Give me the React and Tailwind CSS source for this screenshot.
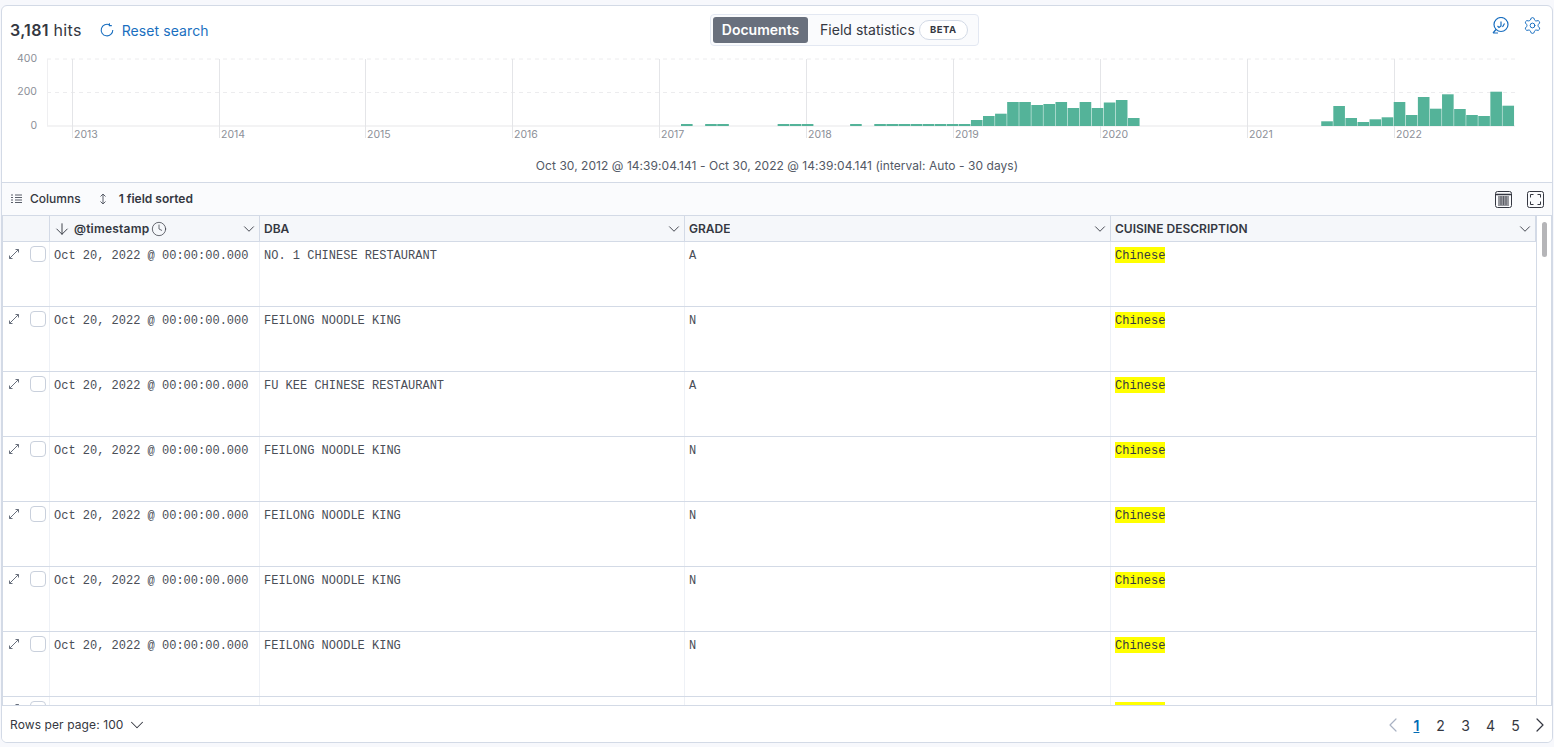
import React from "react";
import { ChevronDown, ChevronLeft, ChevronRight, ArrowDown, Clock, Settings } from "lucide-react";

const rows = [
  "NO. 1 CHINESE RESTAURANT|A",
  "FEILONG NOODLE KING|N",
  "FU KEE CHINESE RESTAURANT|A",
  "FEILONG NOODLE KING|N",
  "FEILONG NOODLE KING|N",
  "FEILONG NOODLE KING|N",
  "FEILONG NOODLE KING|N",
].map((r) => r.split("|"));

const bars = {
  0: 2, 2: 2, 3: 2, 8: 2, 9: 2, 10: 2, 14: 2, 16: 2, 17: 2, 18: 2, 19: 2, 20: 2, 21: 2, 22: 2, 23: 2,
  24: 6, 25: 10, 26: 12.3, 27: 24, 28: 24, 29: 21, 30: 22, 31: 24, 32: 18, 33: 24, 34: 18, 35: 23.5, 36: 26, 37: 8,
  53: 4.7, 54: 20, 55: 8, 56: 4, 57: 6.7, 58: 8.7, 59: 24, 60: 11, 61: 29, 62: 17.3, 63: 31.7, 64: 17, 65: 11, 66: 10, 67: 34.3, 68: 20.3,
};
const years = [[72, 2013], [219, 2014], [365, 2015], [512, 2016], [659, 2017], [806, 2018], [953, 2019], [1100, 2020], [1247, 2021], [1394, 2022]];

function Chart() {
  return (
    <svg viewBox="2 50 1550 100" className="block w-[1550px] h-[100px]">
      <line x1="47" x2="1515" y1="59" y2="59" stroke="#ececee" strokeDasharray="4 4" />
      <line x1="47" x2="1515" y1="92.5" y2="92.5" stroke="#ececee" strokeDasharray="4 4" />
      <line x1="47.5" x2="47.5" y1="59" y2="126" stroke="#efeff1" />
      <line x1="47" x2="1515" y1="126" y2="126" stroke="#efeff1" strokeWidth="1.5" />
      {years.map(([x, y]) => (
        <g key={y}>
          <line x1={x + 0.5} x2={x + 0.5} y1="59" y2="138" stroke="#e4e5e8" />
          <text x={x + 2} y="138" fontSize="10.5" fill="#8c8f98" fontFamily="Inter, sans-serif">{y}</text>
        </g>
      ))}
      {Object.entries(bars).map(([n, h]) => (
        <rect key={n} x={681 + n * 12.08} y={126 - h} width="11.6" height={h} fill="#54b399" />
      ))}
      {[[400, 62], [200, 95], [0, 129]].map(([t, y]) => (
        <text key={t} x="37" y={y} textAnchor="end" fontSize="10.5" fill="#8c8f98" fontFamily="Inter, sans-serif">{t}</text>
      ))}
    </svg>
  );
}

const ExpandIcon = () => (
  <svg width="12" height="12" viewBox="0 0 12 12" fill="none" stroke="#69707d" strokeWidth="1" className="shrink-0">
    <path d="M1.5 10.5 L10.5 1.5 M7.5 1.5 H10.5 V4.5 M1.5 7.5 V10.5 H4.5" />
  </svg>
);

function HeaderCell({ label }) {
  return (
    <div className="flex items-center justify-between pl-[4px] pr-[1px] border-r border-[#d3dae6]">
      <span className="truncate">{label}</span>
      <ChevronDown size={18} strokeWidth={1.2} className="text-[#343741]" />
    </div>
  );
}

export default function App() {
  return (
    <div className="h-[747px] overflow-hidden bg-[#f7f8fc] pt-[5px] pl-px font-['Inter',sans-serif] text-[#343741]">
      <div className="w-[1552px] h-[738px] flex flex-col overflow-hidden rounded-[6px] border border-[#d3dae6] bg-white">
        <div className="h-[44px] shrink-0 flex items-center pt-[4px]">
          <div className="w-[708px] shrink-0 flex items-center pl-[8px]">
            <span className="text-[16px] tracking-[0.3px]"><b className="font-semibold">3,181</b> hits</span>
            <svg width="14" height="14" viewBox="0 0 14 14" fill="none" stroke="#1a6fc0" strokeWidth="1.1" className="ml-[18px]">
              <path d="M9.6 1.9 A5.8 5.8 0 1 0 12.8 7" />
              <path d="M9.4 0.2 V2.6 H11.8" />
            </svg>
            <span className="ml-[8px] text-[14px] tracking-[0.09px] text-[#1a6fc0]">Reset search</span>
          </div>
          <div className="w-[269px] h-[32px] flex items-center rounded-[4px] border border-[#e3e8f2] bg-[#fafbfd] pl-[2px]">
            <span className="w-[95px] h-[26px] flex items-center justify-center rounded-[3px] bg-[#69707d] pb-[1px] text-[14px] font-semibold text-white">Documents</span>
            <span className="ml-[12px] mb-[1px] text-[14px] tracking-[0.03px]">Field statistics</span>
            <span className="ml-[4px] w-[49px] h-[20px] flex items-center justify-center rounded-full border border-[#d3dae6] bg-white text-[9.5px] font-bold tracking-[0.5px]">BETA</span>
          </div>
          <div className="ml-auto flex items-center gap-[14px] pr-[10px] mt-[-10px]">
            <svg width="17" height="17" viewBox="0 0 17 17" fill="none" stroke="#1a6fc0" strokeWidth="1.2">
              <circle cx="9" cy="7.5" r="7" />
              <path d="M4 12.5 L1 16 M1 16 H6" />
              <path d="M5.5 9 L7 10.5 L9 9 L9 4.5 M10.5 10 L12.5 6.5" />
            </svg>
            <Settings size={19} strokeWidth={1.25} className="text-[#1a6fc0]" />
          </div>
        </div>
        <Chart />
        <div className="h-[32px] shrink-0 flex items-center justify-center text-[12px] tracking-[0.05px] text-[#535966]">
          Oct 30, 2012 @ 14:39:04.141 - Oct 30, 2022 @ 14:39:04.141 (interval: Auto - 30 days)
        </div>
        <div className="h-[34px] shrink-0 flex items-center border-y border-[#d3dae6] bg-[#fafbfd] text-[12px] pl-[9px] pr-[8px]">
          <svg width="11" height="10" viewBox="0 0 11 10" fill="none" stroke="#5a5f6a" strokeWidth="1">
            <path d="M0 1 H2 M4 1 H11 M0 3.5 H2 M4 3.5 H11 M0 6 H2 M4 6 H11 M0 8.5 H2 M4 8.5 H11" />
          </svg>
          <span className="ml-[8px] font-medium">Columns</span>
          <svg width="8" height="12" viewBox="0 0 8 12" fill="none" stroke="#5a5f6a" strokeWidth="1" className="ml-[18px]">
            <path d="M4 1 V11 M1.5 3.5 L4 1 L6.5 3.5 M1.5 8.5 L4 11 L6.5 8.5" />
          </svg>
          <span className="ml-[12px] font-semibold">1 field sorted</span>
          <svg width="17" height="17" viewBox="0 0 17 17" fill="none" stroke="#343741" strokeWidth="1" className="ml-auto">
            <rect x="0.5" y="0.5" width="16" height="16" rx="2" />
            <path d="M1 3.5 H16" strokeWidth="1.5" />
            <path d="M3 6 H14 M3 8 H14 M3 10 H14 M3 12 H14 M3 14 H14" />
            <path d="M6 5 V14 M8.5 5 V14 M11 5 V14" strokeWidth="0.6" />
          </svg>
          <svg width="17" height="17" viewBox="0 0 17 17" fill="none" stroke="#343741" strokeWidth="1" className="ml-[15px]">
            <rect x="0.5" y="0.5" width="16" height="16" rx="2" />
            <path d="M3.5 6.5 V3.5 H6.5 M10.5 3.5 H13.5 V6.5 M13.5 10.5 V13.5 H10.5 M6.5 13.5 H3.5 V10.5" />
          </svg>
        </div>
        <div className="flex-1 min-h-0 overflow-hidden relative border-x border-[#d3dae6]">
          <div className="grid grid-cols-[47px_210px_425px_426px_425px] h-[26px] border-b border-[#d3dae6] bg-[#f5f7fa] text-[12px] font-semibold w-[1533px] items-stretch">
            <div className="border-r border-[#d3dae6]" />
            <div className="flex items-center justify-between pl-[3px] pr-[1px] border-r border-[#d3dae6]">
              <span className="flex items-center">
                <ArrowDown size={18} strokeWidth={1.25} />
                <span className="ml-[3px] tracking-[0.2px]">@timestamp</span>
                <Clock size={16} strokeWidth={1.1} className="ml-[2px]" />
              </span>
              <ChevronDown size={18} strokeWidth={1.2} />
            </div>
            <HeaderCell label="DBA" />
            <HeaderCell label="GRADE" />
            <HeaderCell label="CUISINE DESCRIPTION" />
          </div>
          {[...rows, ["", ""]].map(([dba, grade], i) => (
            <div key={i} className="grid grid-cols-[47px_210px_425px_426px_425px] h-[65px] border-b border-[#d3dae6] w-[1533px] text-[12px] font-['Liberation_Mono',monospace] text-[#4a4e57]">
              <div className="flex items-start border-r border-[#eef1f6] pl-[5px]">
                <span className="mt-[6px]"><ExpandIcon /></span>
                <span className="ml-[10px] mt-[4px] w-[16px] h-[16px] rounded-[4px] border border-[#c9d0dc] bg-white" />
              </div>
              <div className="border-r border-[#eef1f6] pl-[4px] pt-[7px] leading-[15px]">{i < 7 ? "Oct 20, 2022 @ 00:00:00.000" : ""}</div>
              <div className="border-r border-[#eef1f6] pl-[4px] pt-[7px] leading-[15px]">{dba}</div>
              <div className="border-r border-[#eef1f6] pl-[4px] pt-[7px] leading-[15px]">{grade}</div>
              <div className="pl-[4px] pt-[5px]">
                {i < 7 ? (
                  <span className="inline-block align-top h-[16px] bg-[#ffff00] text-[#343741] pt-[2px] leading-[15px]">Chinese</span>
                ) : (
                  <span className="block w-[50px] h-[16px] bg-[#ffff00]" />
                )}
              </div>
            </div>
          ))}
          <div className="absolute left-[1533px] top-0 bottom-0 w-px bg-[#d3dae6]" />
          <div className="absolute left-[1539px] top-[6px] w-[5px] h-[35px] rounded-full bg-[#b5b5b8]" />
        </div>
        <div className="h-[37px] shrink-0 flex items-center border-t border-[#d3dae6] bg-white pl-[8px] pt-[2px] text-[12px]">
          <span className="tracking-[0.1px]">Rows per page: 100</span>
          <ChevronDown size={22} strokeWidth={1.1} className="ml-[2px]" />
          <div className="ml-auto flex items-center text-[14px]">
            <ChevronLeft size={24} strokeWidth={1.2} className="text-[#a9b2c3]" />
            <span className="w-[23px] text-center font-semibold text-[#006bb4] underline">1</span>
            <span className="w-[25px] text-center">2</span>
            <span className="w-[25px] text-center">3</span>
            <span className="w-[25px] text-center">4</span>
            <span className="w-[25px] text-center">5</span>
            <ChevronRight size={24} strokeWidth={1.2} />
          </div>
        </div>
      </div>
    </div>
  );
}
